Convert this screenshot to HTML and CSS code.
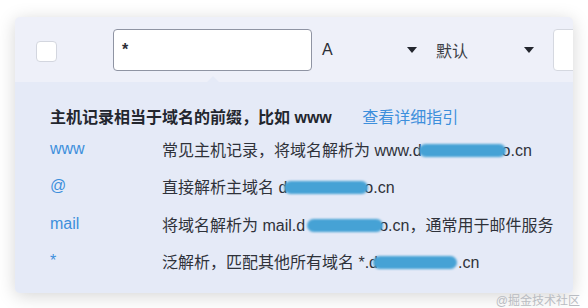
FILE: index.html
```html
<!DOCTYPE html>
<html>
<head>
    <meta charset="UTF-8">
    <title>主机记录</title>
    <link rel="stylesheet" href="styles.css">
</head>
<body>
<div class="card">
    <div class="record-row">
        <span class="check"></span>
        <div class="host-input">*</div>
        <div class="pick pick-type">
            <span>A</span>
            <i class="caret"></i>
        </div>
        <div class="pick pick-line">
            <span>默认</span>
            <i class="caret"></i>
        </div>
        <div class="value-input"></div>
    </div>

    <div class="tip-panel">
        <div class="tip-head">
            <b>主机记录相当于域名的前缀，比如 www</b>
            <a class="guide">查看详细指引</a>
        </div>
        <div class="tip-list">
            <span class="key">www</span>
            <span>常见主机记录，将域名解析为 www.d<i class="blur b1"></i>o.cn</span>

            <span class="key">@</span>
            <span>直接解析主域名 d<i class="blur b2"></i>o.cn</span>

            <span class="key">mail</span>
            <span>将域名解析为 mail.d<i class="blur b3"></i>o.cn，通常用于邮件服务</span>

            <span class="key">*</span>
            <span>泛解析，匹配其他所有域名 *.d<i class="blur b4"></i>.cn</span>
        </div>
    </div>
</div>
<div class="mark">@掘金技术社区</div>
</body>
</html>
```

FILE: styles.css
```css
body {
    margin: 0;
    background-color: #fff;
    font-family: "Liberation Sans", "Noto Sans CJK SC", sans-serif;
    color: #2b2e36;
}
.card {
    margin: 17px 15px 0 15px;
    height: 276px;
    border-radius: 5px;
    overflow: hidden;
    background-color: #eef0f9;
    box-shadow: 0 3px 18px rgba(0,0,0,0.17);
    display: flex;
    flex-direction: column;
}
.record-row {
    height: 65px;
    flex-shrink: 0;
    display: flex;
    align-items: center;
    padding-left: 21px;
}
.record-row > * {
    flex-shrink: 0;
}
.check {
    width: 19px;
    height: 19px;
    border: 1px solid #d3d6df;
    border-radius: 4px;
    background-color: #fff;
    margin-top: 3px;
}
.host-input {
    margin-left: 56px;
    width: 189px;
    height: 40px;
    border: 1px solid #8f94a3;
    border-radius: 4px;
    background-color: #fff;
    padding-left: 8px;
    font-size: 16px;
    font-weight: bold;
    line-height: 40px;
    margin-top: 1px;
    position: relative;
}
.host-input::after {
    content: "";
    position: absolute;
    left: 92px;
    bottom: -13px;
    border-left: 7px solid transparent;
    border-right: 7px solid transparent;
    border-bottom: 7px solid #e5eaf7;
}
.pick {
    display: flex;
    align-items: center;
    justify-content: space-between;
    font-size: 16px;
    height: 42px;
    box-sizing: border-box;
}
.pick-type {
    width: 105px;
    padding-left: 10px;
}
.pick-line {
    width: 112px;
    padding-left: 14px;
    margin-left: 5px;
    color: #3a3d45;
}
.caret {
    width: 0;
    height: 0;
    border-left: 5px solid transparent;
    border-right: 5px solid transparent;
    border-top: 6px solid #23262e;
}
.value-input {
    margin-left: 19px;
    width: 40px;
    height: 40px;
    border: 1px solid #d5d8e0;
    border-radius: 4px;
    background-color: #fff;
}
.tip-panel {
    flex: 1;
    background-color: #e5eaf7;
    padding: 25px 0 0 35px;
    font-size: 16px;
}
.tip-head {
    line-height: 22px;
    margin-bottom: 1px;
}
.tip-head b {
    color: #23262e;
}
.guide {
    color: #3d8fdc;
    margin-left: 26px;
}
.tip-list {
    display: grid;
    grid-template-columns: 112px auto;
    grid-auto-rows: 37.5px;
    align-items: center;
    color: #2f323a;
}
.key {
    color: #3d8fdc;
}
.blur {
    display: inline-block;
    height: 13px;
    background-color: #46a2d5;
    border-radius: 7px;
    vertical-align: -1px;
    filter: blur(0.8px);
    margin-right: -4px;
}
.b1 { width: 87px; margin-left: -3px; }
.b2 { width: 84px; margin-left: -3px; }
.b3 { width: 76px; margin-left: 2px; }
.b4 { width: 84px; margin-left: -5px; margin-right: 1px; }
.mark {
    text-align: right;
    padding-right: 8px;
    margin-top: 1px;
    font-size: 12px;
    line-height: 14px;
    color: #b9bcc2;
}
```
